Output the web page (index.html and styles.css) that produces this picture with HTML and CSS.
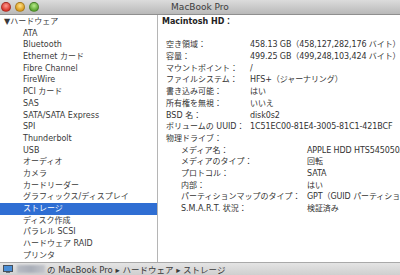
FILE: index.html
```html
<!DOCTYPE html>
<html lang="ja">
  <head>
    <meta charset="UTF-8" />
    <title>MacBook Pro</title>
    <link rel="stylesheet" href="styles.css">
  </head>
  <body>
    <div class="window">
      <div class="titlebar">
        <div class="lights">
          <span class="light red"></span>
          <span class="light yellow"></span>
          <span class="light green"></span>
        </div>
        <div class="title">MacBook Pro</div>
      </div>

      <div class="main">
        <!-- サイドバー -->
        <ul class="sidebar">
          <li class="group">▼ハードウェア</li>
          <li>ATA</li>
          <li>Bluetooth</li>
          <li>Ethernet カード</li>
          <li>Fibre Channel</li>
          <li>FireWire</li>
          <li>PCI カード</li>
          <li>SAS</li>
          <li>SATA/SATA Express</li>
          <li>SPI</li>
          <li>Thunderbolt</li>
          <li>USB</li>
          <li>オーディオ</li>
          <li>カメラ</li>
          <li>カードリーダー</li>
          <li>グラフィックス/ディスプレイ</li>
          <li class="selected">ストレージ</li>
          <li>ディスク作成</li>
          <li>パラレル SCSI</li>
          <li>ハードウェア RAID</li>
          <li>プリンタ</li>
        </ul>

        <!-- 詳細 -->
        <div class="detail">
          <h2>Macintosh HD：</h2>
          <div class="rows">
            <div class="row"><span class="label">空き領域：</span><span class="value">458.13 GB（458,127,282,176 バイト）</span></div>
            <div class="row"><span class="label">容量：</span><span class="value">499.25 GB（499,248,103,424 バイト）</span></div>
            <div class="row"><span class="label">マウントポイント：</span><span class="value">/</span></div>
            <div class="row"><span class="label">ファイルシステム：</span><span class="value">HFS+（ジャーナリング）</span></div>
            <div class="row"><span class="label">書き込み可能：</span><span class="value">はい</span></div>
            <div class="row"><span class="label">所有権を無視：</span><span class="value">いいえ</span></div>
            <div class="row"><span class="label">BSD 名：</span><span class="value">disk0s2</span></div>
            <div class="row"><span class="label">ボリュームの UUID：</span><span class="value">1C51EC00-81E4-3005-81C1-421BCF</span></div>
            <div class="row"><span class="label">物理ドライブ：</span></div>
          </div>
          <div class="rows sub">
            <div class="row"><span class="label">メディア名：</span><span class="value">APPLE HDD HTS545050A</span></div>
            <div class="row"><span class="label">メディアのタイプ：</span><span class="value">回転</span></div>
            <div class="row"><span class="label">プロトコル：</span><span class="value">SATA</span></div>
            <div class="row"><span class="label">内部：</span><span class="value">はい</span></div>
            <div class="row"><span class="label">パーティションマップのタイプ：</span><span class="value">GPT（GUID パーティション</span></div>
            <div class="row"><span class="label">S.M.A.R.T. 状況：</span><span class="value">検証済み</span></div>
          </div>
        </div>
      </div>

      <div class="statusbar">
        <svg class="mac-icon" width="10" height="8" viewBox="0 0 10 8">
          <rect x="0.5" y="0.5" width="9" height="6" fill="#4a8fd8" stroke="#46505c" />
          <rect x="3" y="7" width="4" height="1" fill="#6b737c" />
        </svg>
        <span class="blur"></span>
        <span class="path">の MacBook Pro ▸ ハードウェア ▸ ストレージ</span>
      </div>
    </div>
  </body>
</html>
```

FILE: styles.css
```css
* {
    margin: 0;
    padding: 0;
    box-sizing: border-box;
}

body {
    width: 400px;
    height: 275px;
    overflow: hidden;
    font-family: "DejaVu Sans", "Noto Sans CJK JP", sans-serif;
    font-size: 8px;
    color: #333;
    background: #fff;
}

.window {
    display: flex;
    flex-direction: column;
    height: 275px;
}

.titlebar {
    position: relative;
    height: 15px;
    background: linear-gradient(#dcdcdc, #b9b9b9);
    border-bottom: 1px solid #8f8f8f;
    display: flex;
    align-items: center;
    justify-content: center;
}

.lights {
    position: absolute;
    left: 1px;
    top: 2px;
    display: flex;
    gap: 4px;
}

.light {
    width: 10px;
    height: 10px;
    border-radius: 50%;
    border: 1px solid rgba(0, 0, 0, 0.25);
}

.red {
    background: radial-gradient(circle at 50% 35%, #ff9a8f, #d8352a 70%);
}

.yellow {
    background: radial-gradient(circle at 50% 35%, #ffe38a, #d99a1e 70%);
}

.green {
    background: radial-gradient(circle at 50% 35%, #b8ec8a, #5ba531 70%);
}

.title {
    font-family: "DejaVu Sans", sans-serif;
    font-size: 9px;
    color: #3c3c3c;
}

.main {
    flex: 1;
    display: flex;
    min-height: 0;
}

.sidebar {
    list-style: none;
    width: 158px;
    border-right: 1px solid #b5b5b5;
    padding-top: 1px;
}

.sidebar li {
    height: 11.7px;
    line-height: 11.7px;
    padding-left: 23px;
    white-space: nowrap;
    color: #3a3a3a;
}

.sidebar li.group {
    padding-left: 4px;
}

.sidebar li.selected {
    background: #2f6ed3;
    color: #fff;
}

.detail {
    flex: 1;
    padding: 1px 0 0 4px;
    white-space: nowrap;
    overflow: hidden;
}

.detail h2 {
    font-size: 8px;
    font-weight: bold;
    color: #222;
    line-height: 11.7px;
    height: 23.4px;
}

.rows {
    padding-left: 4px;
}

.row {
    display: flex;
    height: 11.7px;
    line-height: 11.7px;
}

.label {
    width: 84px;
    flex: none;
}

.value {
    letter-spacing: -0.1px;
}

.sub {
    padding-left: 19px;
}

.sub .label {
    width: 126px;
}

.statusbar {
    height: 13px;
    background: linear-gradient(#e4e4e4, #cfcfcf);
    border-top: 1px solid #a9a9a9;
    display: flex;
    align-items: center;
    padding-left: 3px;
    font-size: 8.5px;
    color: #3a3a3a;
}

.mac-icon {
    flex: none;
}

.blur {
    width: 28px;
    height: 8px;
    margin-left: 4px;
    margin-right: 2px;
    background: linear-gradient(90deg, #b8bcc4, #a9aeb8, #c2c5cb);
    filter: blur(1px);
}
```
